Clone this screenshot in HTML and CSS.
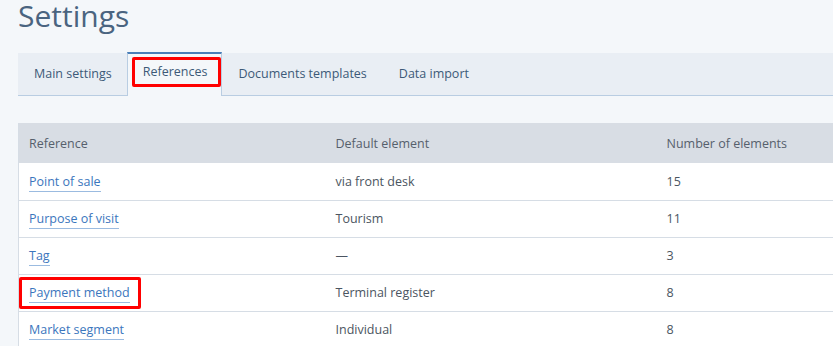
FILE: index.html
```html
<!DOCTYPE html>
<html lang="en">
<head>
    <meta charset="UTF-8">
    <title>Settings</title>
    <link rel="stylesheet" href="styles.css">
</head>
<body>
    <h1 class="page-title">Settings</h1>

    <!-- Tabs -->
    <div class="tabs">
        <div class="tab">Main settings</div>
        <div class="tab tab-active"><span class="mark">References</span></div>
        <div class="tab">Documents templates</div>
        <div class="tab">Data import</div>
    </div>

    <!-- References table -->
    <table class="ref-table">
        <thead>
            <tr>
                <th class="col-ref">Reference</th>
                <th class="col-def">Default element</th>
                <th>Number of elements</th>
            </tr>
        </thead>
        <tbody>
            <tr>
                <td><a href="#">Point of sale</a></td>
                <td>via front desk</td>
                <td>15</td>
            </tr>
            <tr>
                <td><a href="#">Purpose of visit</a></td>
                <td>Tourism</td>
                <td>11</td>
            </tr>
            <tr>
                <td><a href="#">Tag</a></td>
                <td>—</td>
                <td>3</td>
            </tr>
            <tr>
                <td class="marked-cell"><span class="mark-cell"><a href="#">Payment method</a></span></td>
                <td>Terminal register</td>
                <td>8</td>
            </tr>
            <tr>
                <td><a href="#">Market segment</a></td>
                <td>Individual</td>
                <td>8</td>
            </tr>
        </tbody>
    </table>
</body>
</html>
```

FILE: styles.css
```css
* {
    box-sizing: border-box;
    margin: 0;
    padding: 0;
}

body {
    background-color: #f4f7fa;
    font-family: 'Open Sans', sans-serif;
    color: #4b5561;
    padding: 0 0 0 18px;
    width: 860px;
    overflow: hidden;
}

.page-title {
    font-size: 30px;
    font-weight: 400;
    color: #4a6480;
    line-height: 32px;
    height: 52px;
}

.tabs {
    display: flex;
    background-color: #e9eef4;
    border-bottom: 1px solid #b9cde2;
    height: 43px;
    margin-top: 1px;
}

.tab {
    font-size: 12.5px;
    color: #3d5a78;
    padding: 0 16px;
    line-height: 42px;
    white-space: nowrap;
}

.tab:first-child {
    padding-right: 15px;
}

.tab-active {
    background-color: #f4f7fa;
    border-top: 2px solid #4a7fb8;
    border-left: 1px solid #b9cde2;
    border-right: 1px solid #b9cde2;
    margin-top: -1px;
    margin-bottom: -1px;
    height: 44px;
    padding: 0 0 0 4px;
    line-height: 38px;
}

.mark {
    display: block;
    border: 3px solid #f00;
    border-radius: 2px;
    height: 30px;
    margin-top: 3px;
    line-height: 24px;
    padding: 0 11px 0 8px;
}

.ref-table {
    margin-top: 27px;
    width: 842px;
    border-collapse: collapse;
    background-color: #fff;
    border-left: 1px solid #d6dde5;
    font-size: 12.5px;
}

.ref-table th {
    background-color: #d8dde4;
    font-weight: 400;
    color: #56606c;
    text-align: left;
    height: 40px;
    padding: 0 10px;
}

.ref-table td {
    height: 37px;
    padding: 0 10px;
    border-bottom: 1px solid #d6dde5;
}

.ref-table tr:last-child td {
    border-bottom: none;
}

.col-ref {
    width: 307px;
}

.col-def {
    width: 331px;
}

.ref-table a {
    color: #3b76bd;
    text-decoration: none;
    border-bottom: 1px solid #9bbbe0;
    padding-bottom: 1px;
}

.marked-cell {
    padding: 0 !important;
}

.mark-cell {
    display: inline-block;
    border: 3px solid #f00;
    border-radius: 2px;
    padding: 4px 8px 5px 7px;
    margin-top: 1px;
}
```
